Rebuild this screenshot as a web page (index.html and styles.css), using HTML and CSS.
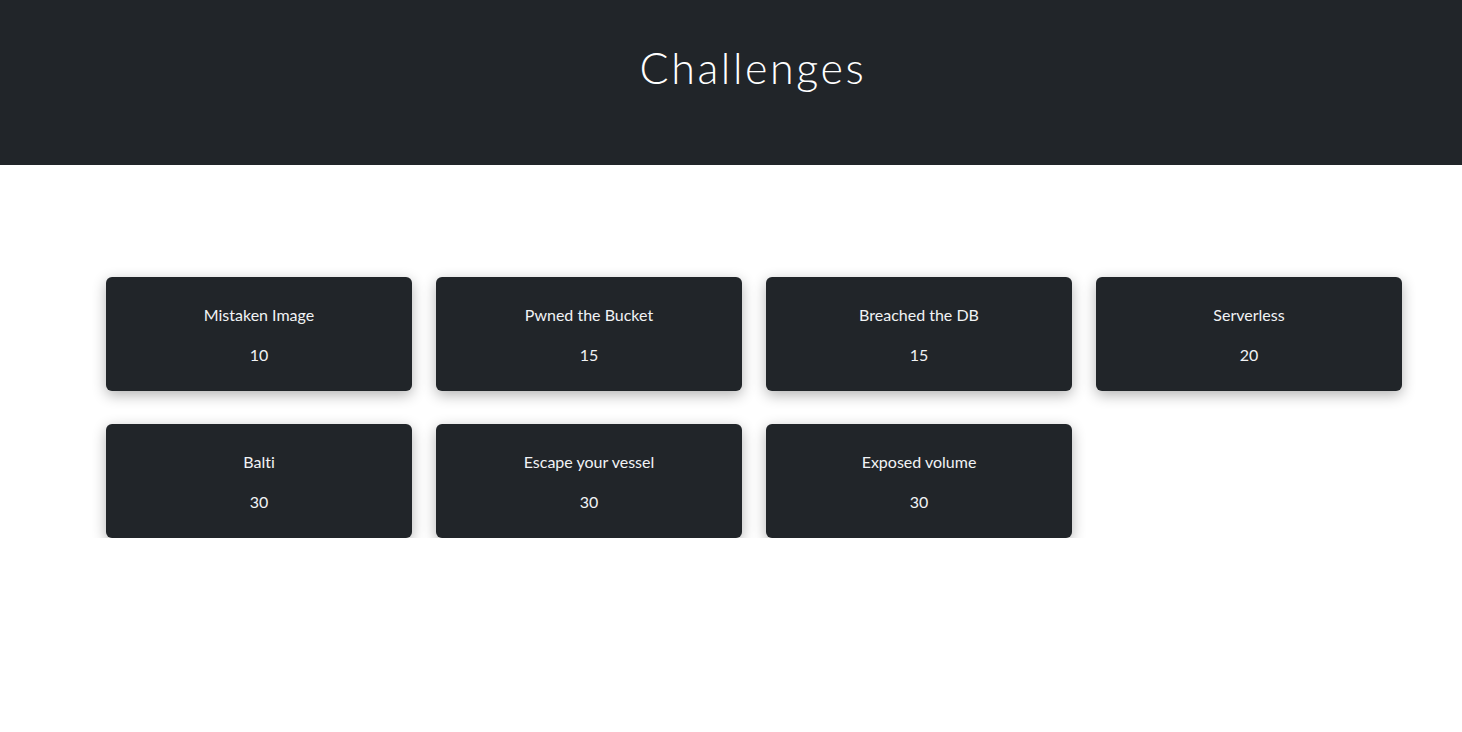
FILE: index.html
```html
<!DOCTYPE html>
<html>
<head>
<meta charset="utf-8">
<link rel="stylesheet" href="styles.css">
</head>
<body>
<header class="hero">
  <h1 class="hero-title">Challenges</h1>
</header>
<main class="board">
  <div class="card"><div class="card-name">Mistaken Image</div><div class="card-points">10</div></div>
  <div class="card"><div class="card-name">Pwned the Bucket</div><div class="card-points">15</div></div>
  <div class="card"><div class="card-name">Breached the DB</div><div class="card-points">15</div></div>
  <div class="card"><div class="card-name">Serverless</div><div class="card-points">20</div></div>
  <div class="card"><div class="card-name">Balti</div><div class="card-points">30</div></div>
  <div class="card"><div class="card-name">Escape your vessel</div><div class="card-points">30</div></div>
  <div class="card"><div class="card-name">Exposed volume</div><div class="card-points">30</div></div>
</main>
</body>
</html>
```
FILE: styles.css
```css
html, body {
  margin: 0;
  padding: 0;
  background: #ffffff;
  font-family: Lato, "Liberation Sans", sans-serif;
  font-variant-ligatures: none;
}
.hero {
  background: #212529;
  height: 165px;
  box-sizing: border-box;
  padding: 42px 0 0 44px;
  text-align: center;
}
.hero-title {
  margin: 0;
  color: #ffffff;
  font-family: Lato, "Open Sans", sans-serif;
  font-weight: 300;
  font-size: 43px;
  line-height: 52px;
  letter-spacing: 2.6px;
}
.board {
  display: grid;
  grid-template-columns: repeat(4, 306px);
  column-gap: 24px;
  row-gap: 33px;
  padding: 112px 0 0 106px;
}
.card {
  background: #212529;
  border-radius: 6px;
  height: 114px;
  box-sizing: border-box;
  padding-top: 28px;
  text-align: center;
  color: #f1f3f5;
  box-shadow: 0 4px 14px rgba(0, 0, 0, 0.3);
  font-size: 16px;
  line-height: 20px;
}
.card-points {
  margin-top: 20px;
}
```
